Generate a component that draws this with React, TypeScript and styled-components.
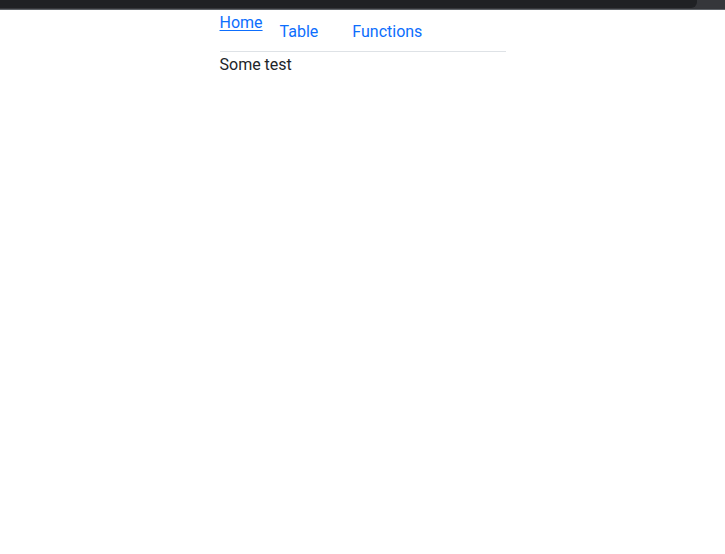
import React from "react";
import styled, { createGlobalStyle } from "styled-components";

const Global = createGlobalStyle`
  html, body { margin: 0; padding: 0; background: #fff; }
  body {
    font-family: Roboto, "Liberation Sans", sans-serif;
    font-size: 16px;
    line-height: 24px;
    color: #212529;
  }
  * { box-sizing: border-box; }
`;

const Chrome = styled.div`
  height: 10px;
  background: #35363a;
  border-bottom: 1px solid #5f6368;
  display: flex;
`;

const ChromeTab = styled.div`
  width: 697px;
  height: 8px;
  background: #202124;
  border-bottom-right-radius: 6px;
`;

const Container = styled.div`
  width: 286px;
  margin: 0 auto;
`;

const Nav = styled.ul`
  display: flex;
  align-items: flex-start;
  list-style: none;
  margin: 0;
  padding: 0;
  border-bottom: 1px solid #dee2e6;
`;

const HomeLink = styled.a`
  display: inline-block;
  padding-top: 1px;
  color: #0d6efd;
  text-decoration: underline;
  text-underline-offset: 2px;
  line-height: 24px;
`;

const NavItem = styled.li`
  margin-bottom: -1px;
`;

const NavLink = styled.a`
  display: block;
  padding: 9px 16px 7px;
  border: 1px solid transparent;
  color: #0d6efd;
  text-decoration: none;
  line-height: 24px;
`;

const Content = styled.div`
  padding-top: 1px;
  line-height: 24px;
`;

export default function App() {
  return (
    <>
      <Global />
      <Chrome>
        <ChromeTab />
      </Chrome>
      <Container>
        <Nav>
          <HomeLink href="#">Home</HomeLink>
          <NavItem>
            <NavLink href="#">Table</NavLink>
          </NavItem>
          <NavItem>
            <NavLink href="#">Functions</NavLink>
          </NavItem>
        </Nav>
        <Content>Some test</Content>
      </Container>
    </>
  );
}
